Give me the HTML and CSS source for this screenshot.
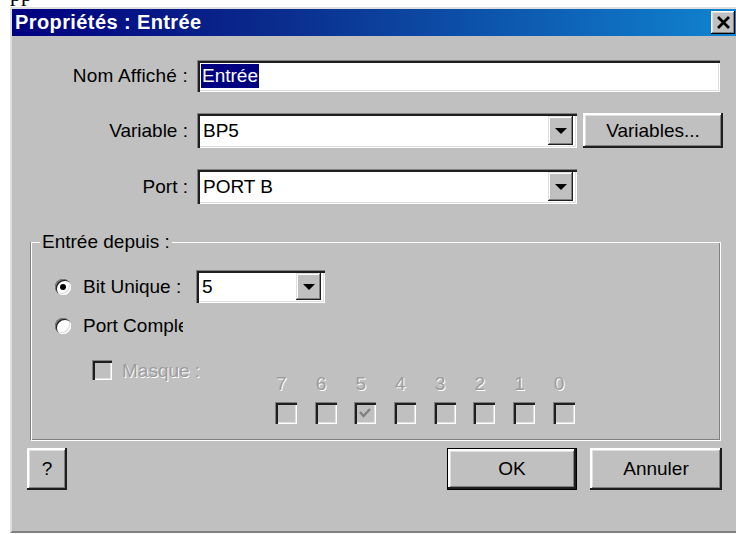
FILE: index.html
```html
<!DOCTYPE html>
<html lang="fr">
<head>
<meta charset="utf-8">
<title>Propriétés : Entrée</title>
<link rel="stylesheet" href="styles.css">
</head>
<body>
<div class="doc-line"><span>pp</span></div>

<div class="dialog">
  <div class="titlebar">
    <span class="title">Propriétés : Entrée</span>
    <button class="close" type="button" aria-label="Fermer">
      <svg width="15" height="13" viewBox="0 0 15 13"><path d="M2 1 L13 12 M13 1 L2 12" stroke="#000" stroke-width="2.8" fill="none"/></svg>
    </button>
  </div>

  <div class="content">
    <div class="form">
      <label class="lbl">Nom Affiché :</label>
      <div class="field sunken text-field"><span class="selected">Entrée</span></div>

      <label class="lbl">Variable :</label>
      <div class="combo sunken"><span class="value">BP5</span><span class="drop"><i class="tri"></i></span></div>
      <button class="btn btn-vars" type="button">Variables...</button>

      <label class="lbl">Port :</label>
      <div class="combo sunken"><span class="value">PORT B</span><span class="drop"><i class="tri"></i></span></div>
    </div>

    <fieldset class="group">
      <legend>Entrée depuis :</legend>
      <div class="opt-row row-bit">
        <span class="radio checked"></span>
        <span class="opt-text opt-bit">Bit Unique :</span>
        <div class="combo sunken combo-bit"><span class="value">5</span><span class="drop"><i class="tri"></i></span></div>
      </div>
      <div class="opt-row row-port">
        <span class="radio"></span>
        <span class="opt-text opt-port">Port Complet</span>
      </div>
      <div class="mask-row">
        <div class="mask">
          <span class="check disabled"></span>
          <span class="dis-text">Masque :</span>
        </div>
        <div class="bits">
          <span class="bit-num">7</span><span class="bit-num">6</span><span class="bit-num">5</span><span class="bit-num">4</span>
          <span class="bit-num">3</span><span class="bit-num">2</span><span class="bit-num">1</span><span class="bit-num">0</span>
          <span class="bit-box"></span><span class="bit-box"></span>
          <span class="bit-box"><svg width="14" height="12" viewBox="0 0 14 12"><path d="M2 5 L5.5 9 L12 2" stroke="#808080" stroke-width="2.4" fill="none"/></svg></span>
          <span class="bit-box"></span><span class="bit-box"></span><span class="bit-box"></span><span class="bit-box"></span><span class="bit-box"></span>
        </div>
      </div>
    </fieldset>

    <div class="actions">
      <button class="btn btn-help" type="button">?</button>
      <button class="btn btn-ok default" type="button">OK</button>
      <button class="btn btn-cancel" type="button">Annuler</button>
    </div>
  </div>
</div>
</body>
</html>
```

FILE: styles.css
```css
html, body {
  margin: 0;
  padding: 0;
  background: #fff;
  overflow: hidden;
}

body {
  width: 736px;
  height: 534px;
  font-family: "Liberation Sans", Arial, sans-serif;
  font-size: 19px;
  color: #000;
}

/* tail of the document text above the dialog */
.doc-line {
  height: 7px;
  overflow: hidden;
  padding-left: 10px;
  font-family: "Liberation Serif", serif;
  font-size: 22px;
}
.doc-line span {
  display: block;
  line-height: 22px;
  margin-top: -17px;
}

.dialog {
  margin-left: 10px;
  width: 730px;
  height: 526px;
  box-sizing: border-box;
  background: #c0c0c0;
  border: 2px solid;
  border-color: #dfdfdf #404040 #808080 #dfdfdf;
}

.titlebar {
  height: 27px;
  display: flex;
  align-items: center;
  justify-content: space-between;
  padding: 0 3px 0 3px;
  background: linear-gradient(90deg, #000080 0%, #0a2a8c 35%, #1084d0 100%);
}
.title {
  color: #fff;
  font-weight: bold;
  font-size: 20px;
  letter-spacing: 0.4px;
}
.close {
  width: 24px;
  height: 23px;
  padding: 0;
  border: none;
  display: flex;
  align-items: center;
  justify-content: center;
  background: #c0c0c0;
  box-shadow: inset -1px -1px #000, inset 1px 1px #fff, inset -2px -2px #808080, inset 2px 2px #dfdfdf;
}

.content {
  padding-top: 24px;
}

/* 3D frames */
.sunken {
  box-sizing: border-box;
  background: #fff;
  box-shadow: inset 1px 1px #808080, inset 3px 3px #1e1e1e, inset -1px -1px #fff, inset -2px -2px #dfdfdf;
}
.btn {
  font-family: inherit;
  font-size: 19px;
  color: #000;
  background: #c0c0c0;
  border: none;
  padding: 0;
  box-shadow: inset -2px -2px #1e1e1e, inset 2px 2px #fff, inset -3px -3px #808080, inset 3px 3px #dfdfdf;
}
.btn.default {
  box-shadow: inset 0 0 0 1px #000, inset -3px -3px #1e1e1e, inset 3px 3px #fff, inset -4px -4px #808080, inset 4px 4px #dfdfdf;
}

/* top form */
.form {
  display: grid;
  grid-template-columns: 185px 380px 146px;
  row-gap: 21px;
  align-items: center;
}
.lbl {
  text-align: right;
  padding-right: 9px;
}
.lbl:first-child {
  letter-spacing: 0.2px;
}
.text-field {
  grid-column: 2 / span 2;
  margin-right: 3px;
  height: 32px;
  display: flex;
  align-items: center;
  padding-left: 4px;
}
.selected {
  background: #000080;
  color: #fff;
  line-height: 24px;
  padding: 0 1px;
}

.combo {
  height: 35px;
  display: flex;
  align-items: stretch;
  padding: 3px 4px 3px 3px;
}
.combo .value {
  flex: 1;
  display: flex;
  align-items: center;
  padding-left: 3px;
}
.drop {
  width: 25px;
  display: flex;
  align-items: center;
  justify-content: center;
  background: #c0c0c0;
  box-shadow: inset -1px -1px #1e1e1e, inset 1px 1px #dfdfdf, inset -2px -2px #808080, inset 2px 2px #fff;
}
.tri {
  width: 0;
  height: 0;
  border-left: 6px solid transparent;
  border-right: 6px solid transparent;
  border-top: 6px solid #000;
}
.btn-vars {
  height: 35px;
  margin-left: 6px;
}

/* group box: grey etched line with a white highlight */
.group {
  position: relative;
  margin: 27px 0 0 18px;
  width: 690px;
  box-sizing: border-box;
  padding: 0;
  border: 1px solid #808080;
  min-inline-size: 0;
}
.group::before {
  content: "";
  position: absolute;
  left: 0;
  top: -11px;
  right: -2px;
  bottom: -2px;
  border: 1px solid #fff;
  pointer-events: none;
}
.group legend {
  position: relative;
  z-index: 1;
  background: #c0c0c0;
  padding: 0 2px;
  margin-left: 9px;
  line-height: 22px;
}

.opt-row {
  display: flex;
  align-items: center;
  padding-left: 24px;
}
.row-bit {
  height: 33px;
  margin-top: 17px;
}
.row-port {
  height: 32px;
  margin-top: 7px;
}
.radio {
  position: relative;
  width: 16px;
  height: 16px;
  border-radius: 50%;
  background: #fff;
  box-shadow: inset 1px 1px #808080, inset 2px 2px #1e1e1e, inset -1px -1px #fff, inset -2px -2px #dfdfdf;
  flex: none;
}
.radio.checked::after {
  content: "";
  position: absolute;
  left: 5px;
  top: 5px;
  width: 6px;
  height: 6px;
  border-radius: 50%;
  background: #000;
}
.opt-text {
  margin-left: 12px;
  white-space: nowrap;
  overflow: hidden;
}
.opt-bit {
  width: 113px;
}
.opt-port {
  width: 100px;
}
.combo-bit {
  width: 129px;
  height: 33px;
}

.mask-row {
  display: flex;
  align-items: flex-start;
  margin-top: 16px;
  padding-bottom: 15px;
}
.mask {
  width: 244px;
  box-sizing: border-box;
  padding-left: 61px;
  display: flex;
  align-items: center;
}
.check {
  width: 20px;
  height: 20px;
  flex: none;
  box-sizing: border-box;
  box-shadow: inset 1px 1px #808080, inset 3px 3px #1e1e1e, inset -1px -1px #fff, inset -2px -2px #dfdfdf;
}
.check.disabled {
  background: #c0c0c0;
}
.dis-text,
.bit-num {
  color: #9c9c9c;
  text-shadow: 1px 1px #fff;
}
.dis-text {
  margin-left: 10px;
  line-height: 22px;
  margin-top: 2px;
}

.bits {
  margin-top: 17px;
  display: grid;
  grid-template-columns: repeat(8, 39.7px);
  grid-template-rows: 18px 22px;
  row-gap: 9px;
}
.bit-num {
  line-height: 18px;
  padding-left: 1px;
}
.bit-box {
  width: 22px;
  height: 22px;
  box-sizing: border-box;
  background: #c0c0c0;
  display: flex;
  align-items: center;
  justify-content: center;
  box-shadow: inset 1px 1px #808080, inset 3px 3px #1e1e1e, inset -1px -1px #fff, inset -2px -2px #dfdfdf;
}

/* bottom buttons */
.actions {
  display: flex;
  margin-top: 8px;
  padding: 0 16px 0 15px;
}
.btn-help {
  width: 40px;
  height: 42px;
}
.btn-ok {
  width: 130px;
  height: 42px;
  margin-left: auto;
}
.btn-cancel {
  width: 132px;
  height: 42px;
  margin-left: 13px;
}
```
